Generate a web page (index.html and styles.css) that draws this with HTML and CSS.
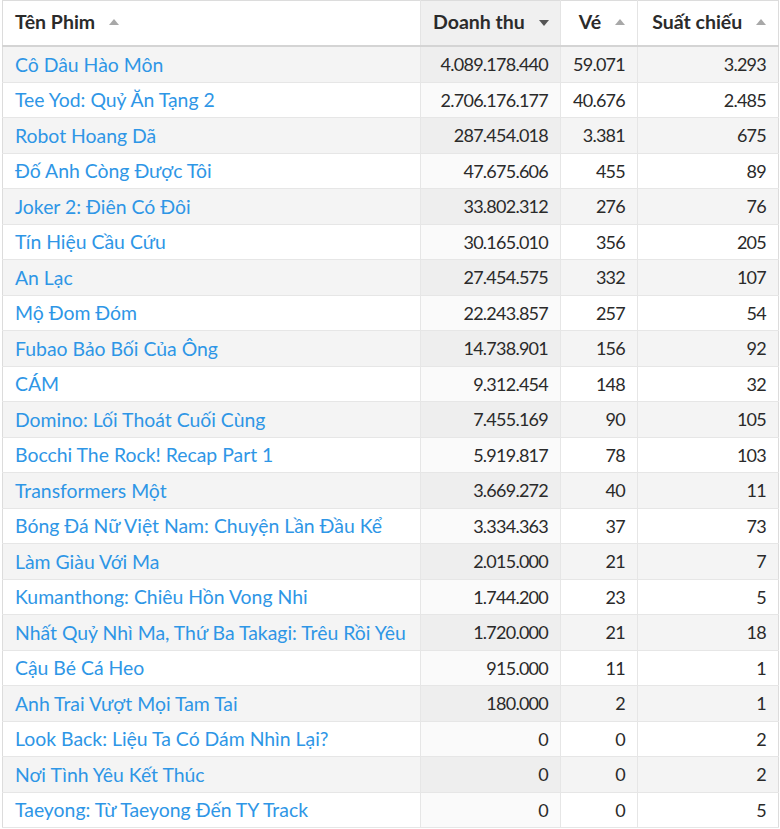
FILE: index.html
```html
<!DOCTYPE html>
<html lang="vi">
<head>
<meta charset="utf-8">
<link rel="stylesheet" href="styles.css">
</head>
<body>
<table class="grid">
  <colgroup>
    <col class="c-name"><col class="c-rev"><col class="c-tix"><col class="c-show">
  </colgroup>
  <thead>
    <tr>
      <th class="h-left">Tên Phim <span class="arrow up"></span></th>
      <th class="sorted">Doanh thu <span class="arrow down"></span></th>
      <th>Vé <span class="arrow up"></span></th>
      <th>Suất chiếu <span class="arrow up"></span></th>
    </tr>
  </thead>
  <tbody>
    <tr><td><a>Cô Dâu Hào Môn</a></td><td class="sorted">4.089.178.440</td><td>59.071</td><td>3.293</td></tr>
    <tr><td><a>Tee Yod: Quỷ Ăn Tạng 2</a></td><td class="sorted">2.706.176.177</td><td>40.676</td><td>2.485</td></tr>
    <tr><td><a>Robot Hoang Dã</a></td><td class="sorted">287.454.018</td><td>3.381</td><td>675</td></tr>
    <tr><td><a>Đố Anh Còng Được Tôi</a></td><td class="sorted">47.675.606</td><td>455</td><td>89</td></tr>
    <tr><td><a>Joker 2: Điên Có Đôi</a></td><td class="sorted">33.802.312</td><td>276</td><td>76</td></tr>
    <tr><td><a>Tín Hiệu Cầu Cứu</a></td><td class="sorted">30.165.010</td><td>356</td><td>205</td></tr>
    <tr><td><a>An Lạc</a></td><td class="sorted">27.454.575</td><td>332</td><td>107</td></tr>
    <tr><td><a>Mộ Đom Đóm</a></td><td class="sorted">22.243.857</td><td>257</td><td>54</td></tr>
    <tr><td><a>Fubao Bảo Bối Của Ông</a></td><td class="sorted">14.738.901</td><td>156</td><td>92</td></tr>
    <tr><td><a>CÁM</a></td><td class="sorted">9.312.454</td><td>148</td><td>32</td></tr>
    <tr><td><a>Domino: Lối Thoát Cuối Cùng</a></td><td class="sorted">7.455.169</td><td>90</td><td>105</td></tr>
    <tr><td><a>Bocchi The Rock! Recap Part 1</a></td><td class="sorted">5.919.817</td><td>78</td><td>103</td></tr>
    <tr><td><a>Transformers Một</a></td><td class="sorted">3.669.272</td><td>40</td><td>11</td></tr>
    <tr><td><a>Bóng Đá Nữ Việt Nam: Chuyện Lần Đầu Kể</a></td><td class="sorted">3.334.363</td><td>37</td><td>73</td></tr>
    <tr><td><a>Làm Giàu Với Ma</a></td><td class="sorted">2.015.000</td><td>21</td><td>7</td></tr>
    <tr><td><a>Kumanthong: Chiêu Hồn Vong Nhi</a></td><td class="sorted">1.744.200</td><td>23</td><td>5</td></tr>
    <tr><td><a>Nhất Quỷ Nhì Ma, Thứ Ba Takagi: Trêu Rồi Yêu</a></td><td class="sorted">1.720.000</td><td>21</td><td>18</td></tr>
    <tr><td><a>Cậu Bé Cá Heo</a></td><td class="sorted">915.000</td><td>11</td><td>1</td></tr>
    <tr><td><a>Anh Trai Vượt Mọi Tam Tai</a></td><td class="sorted">180.000</td><td>2</td><td>1</td></tr>
    <tr><td><a>Look Back: Liệu Ta Có Dám Nhìn Lại?</a></td><td class="sorted">0</td><td>0</td><td>2</td></tr>
    <tr><td><a>Nơi Tình Yêu Kết Thúc</a></td><td class="sorted">0</td><td>0</td><td>2</td></tr>
    <tr><td><a>Taeyong: Từ Taeyong Đến TY Track</a></td><td class="sorted">0</td><td>0</td><td>5</td></tr>
  </tbody>
</table>
</body>
</html>
```
FILE: styles.css
```css
html, body {
  margin: 0;
  padding: 0;
  background: #fff;
}
body {
  padding-left: 2px;
  font-family: "Lato", "Noto Sans", sans-serif;
  color: #333;
}
.grid {
  border-collapse: collapse;
  width: 776px;
  table-layout: fixed;
  border: 1px solid #dcdcdc;
}
.c-name { width: 418px; }
.c-rev { width: 140px; }
.c-tix { width: 77px; }
.c-show { width: 141px; }

th {
  height: 41px;
  padding: 0 12px 3px;
  font-size: 19.5px;
  font-weight: 700;
  color: #2b2b2b;
  text-align: right;
  border-bottom: 2px solid #d4d4d4;
  border-left: 1px solid #e4e4e4;
  white-space: nowrap;
  background: #fff;
}
th.h-left { text-align: left; border-left: none; }
th.sorted { background: #f0f0f0; }

.arrow {
  display: inline-block;
  width: 0;
  height: 0;
  margin-left: 9px;
  vertical-align: middle;
  border-left: 5px solid transparent;
  border-right: 5px solid transparent;
}
.arrow.up { border-bottom: 6px solid #a8a8a8; position: relative; top: -2px; }
.arrow.down { border-top: 6px solid #555; position: relative; top: -1px; }

td {
  height: 34.5px;
  padding: 0 12px;
  font-size: 18px;
  letter-spacing: -0.75px;
  text-align: right;
  color: #2a2a2a;
  border-bottom: 1px solid #e6e6e6;
  border-left: 1px solid #e6e6e6;
  white-space: nowrap;
}
td:first-child {
  text-align: left;
  border-left: none;
  font-size: 19.4px;
  letter-spacing: 0;
}
td a { color: #2e96e6; text-decoration: none; }

tbody tr:nth-child(odd) td { background: #f4f4f4; }
tbody tr:nth-child(odd) td.sorted { background: #eeeeee; }
tbody tr:nth-child(even) td.sorted { background: #fafafa; }
```
